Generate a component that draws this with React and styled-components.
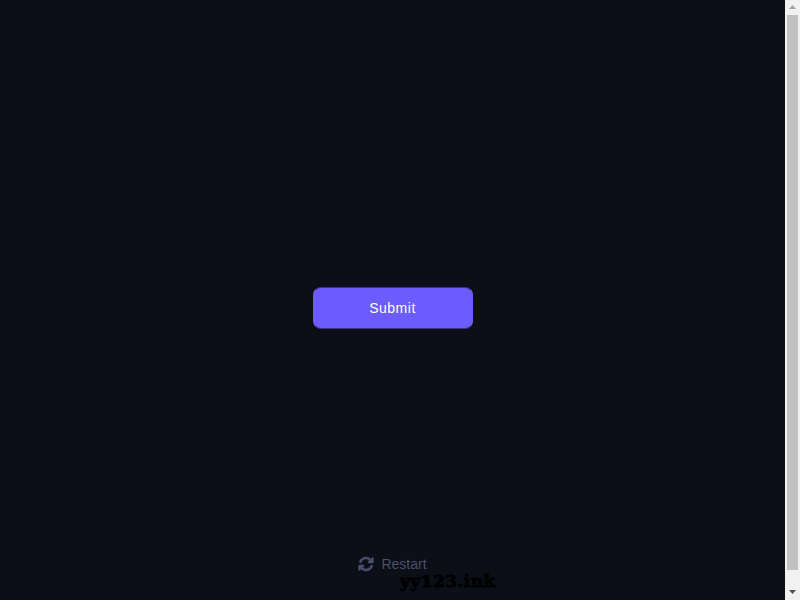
import React from 'react';
import styled, { createGlobalStyle } from 'styled-components';
import { FaArrowsRotate } from 'react-icons/fa6';

const GlobalStyle = createGlobalStyle`
    body {
        margin: 0;
        background: #0c0f18;
        font-family: "Liberation Sans", Arial, sans-serif;
    }
`;

const Shell = styled.div`
    position: relative;
    height: 100vh;
    display: flex;
    overflow: hidden;
`;

const Content = styled.div`
    flex: 1;
    display: flex;
    flex-direction: column;
    align-items: center;
    padding-top: 287px;
    background: #0c0f18;
`;

const SubmitButton = styled.button`
    width: 160px;
    height: 42px;
    margin-bottom: 227px;
    border: 1px solid #3c368c;
    border-left-color: #6c5cff;
    border-right-color: #6c5cff;
    border-radius: 8px;
    background: #6c5cff;
    color: #fff;
    font-family: inherit;
    font-size: 14px;
    letter-spacing: 0.5px;
`;

const RestartButton = styled.button`
    display: flex;
    align-items: center;
    gap: 7px;
    height: 16px;
    padding: 0;
    border: 0;
    background: none;
    color: #4b4f6b;
    font-family: inherit;
    font-size: 14px;

    svg {
        width: 16px;
        height: 16px;
        stroke: currentColor;
        stroke-width: 16;
    }
`;

const Watermark = styled.div`
    position: absolute;
    top: 571px;
    left: 400px;
    color: #000;
    font-family: "DejaVu Serif", serif;
    font-weight: 700;
    font-size: 17px;
    line-height: 20px;
    letter-spacing: 0.45px;
    -webkit-text-stroke: 0.8px #000;
`;

const ScrollBar = styled.aside`
    width: 15px;
    display: flex;
    flex-direction: column;
    align-items: center;
    background: #f1f1f1;
`;

const ScrollArrow = styled.svg`
    flex: none;
    width: 15px;
    height: 15px;
    fill: ${(props) => props.$color};
`;

const ScrollThumb = styled.div`
    width: 11px;
    height: 555px;
    margin-bottom: 15px;
    background: #c1c1c1;
`;

const App = () => (
    <>
        <GlobalStyle />
        <Shell>
            <Content>
                <SubmitButton>Submit</SubmitButton>
                <RestartButton>
                    <FaArrowsRotate />
                    Restart
                </RestartButton>
            </Content>
            <ScrollBar>
                <ScrollArrow $color="#a3a3a3" viewBox="0 0 15 15">
                    <path d="M7.5 5 11 9H4z" />
                </ScrollArrow>
                <ScrollThumb />
                <ScrollArrow $color="#505050" viewBox="0 0 15 15">
                    <path d="M4 5h7l-3.5 4z" />
                </ScrollArrow>
            </ScrollBar>
            <Watermark>yy123.ink</Watermark>
        </Shell>
    </>
);

export default App;
